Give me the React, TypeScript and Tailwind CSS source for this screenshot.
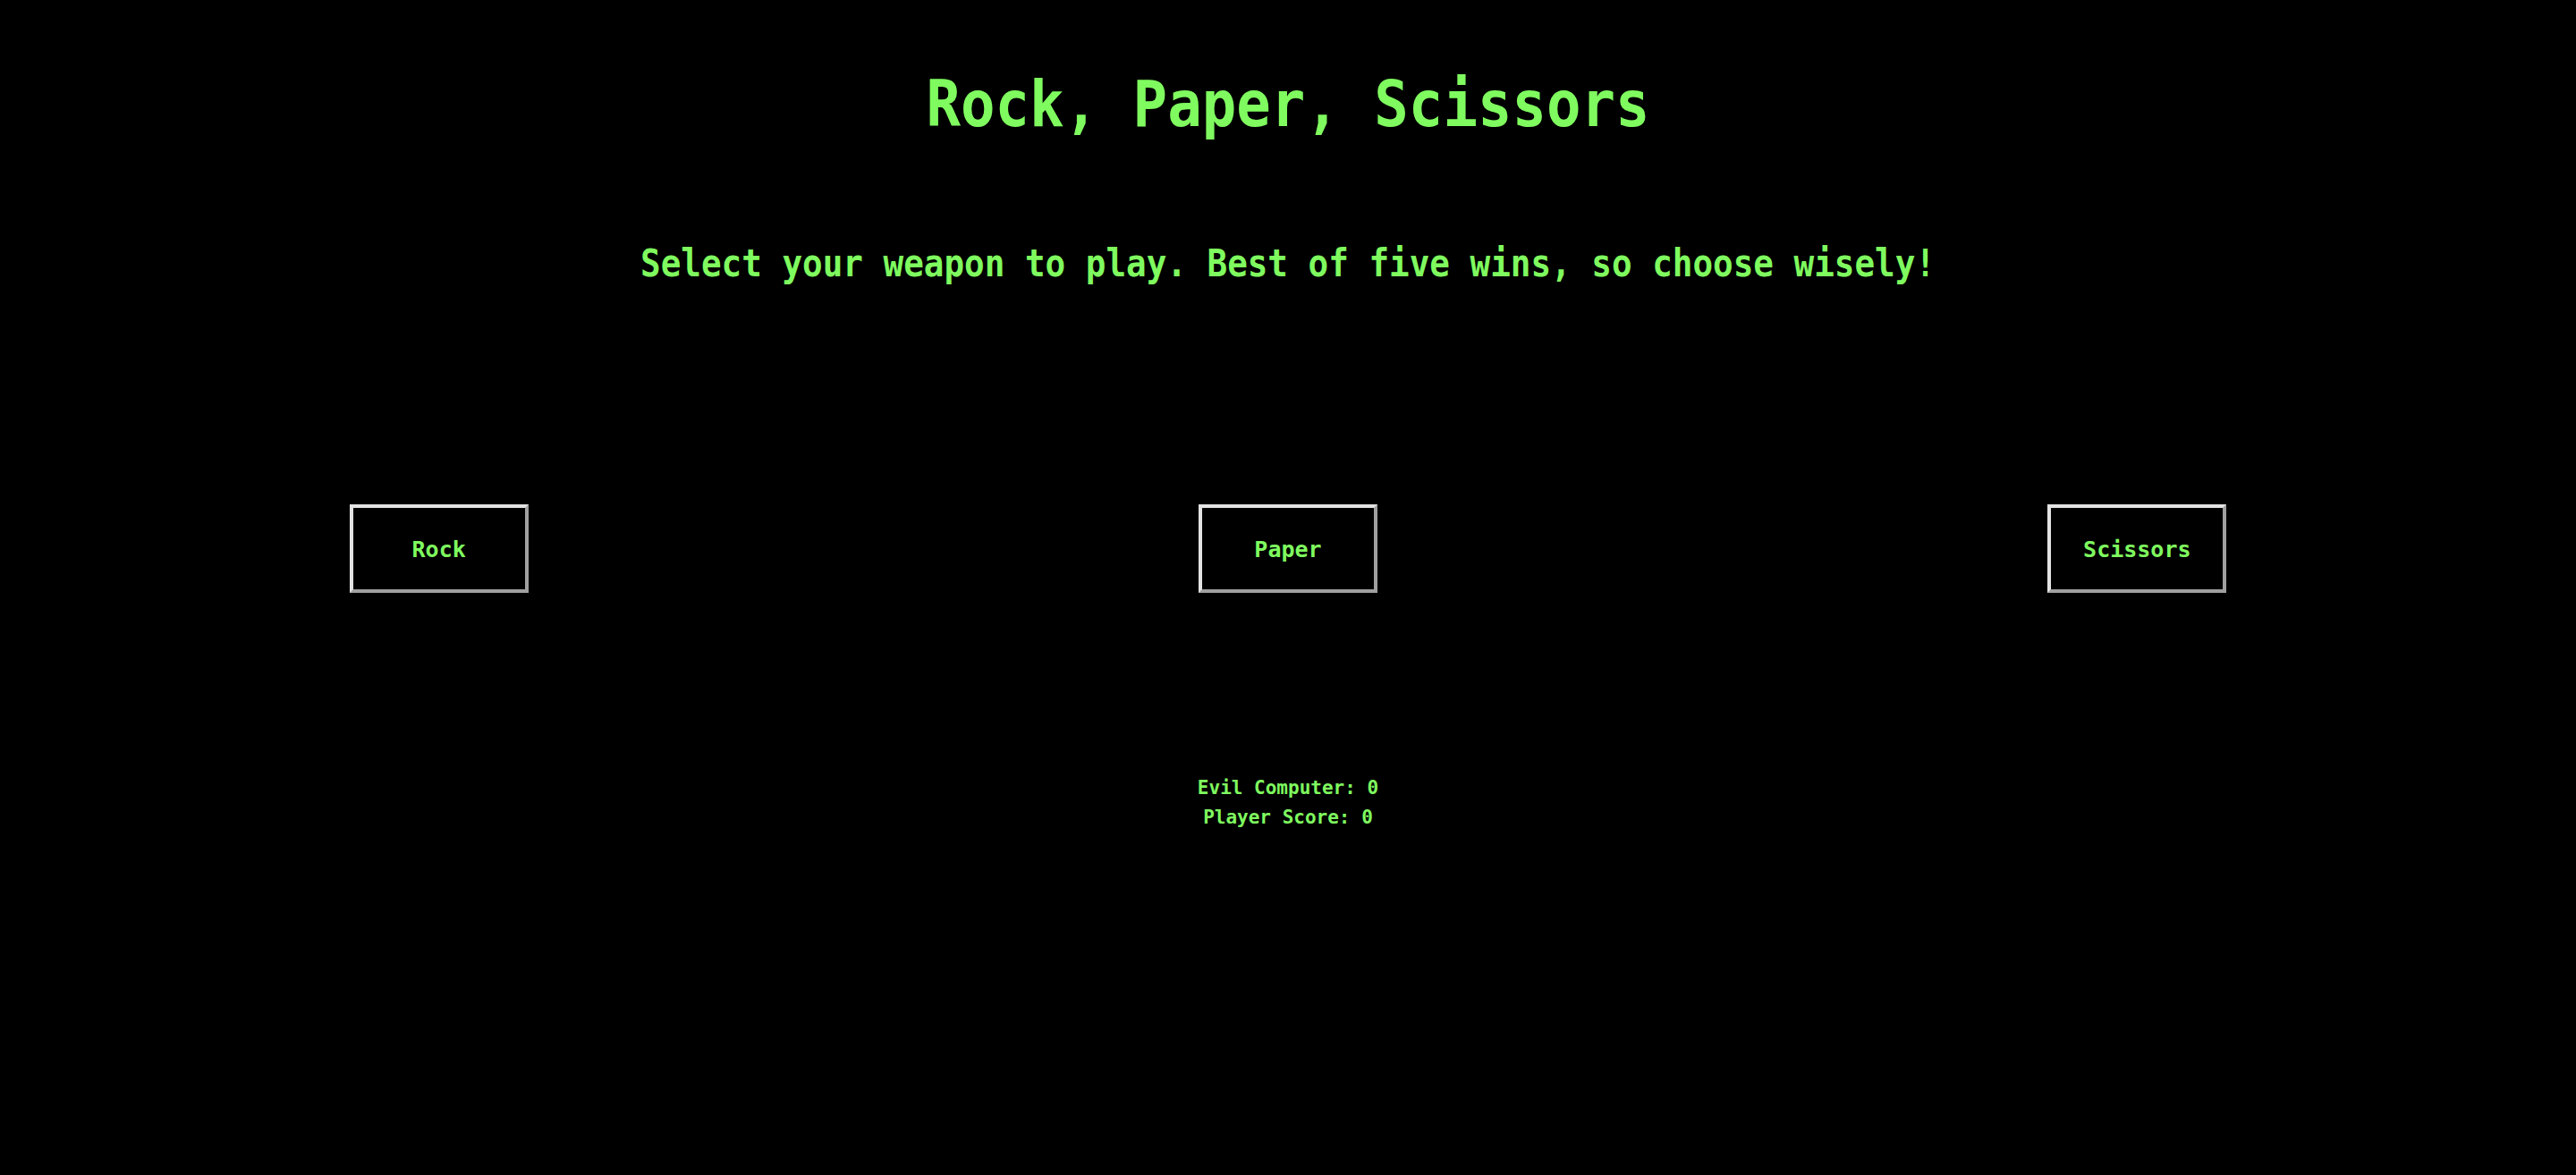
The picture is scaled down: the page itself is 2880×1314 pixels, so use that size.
import React from "react";

const mono = { fontFamily: '"DejaVu Sans Mono", "Liberation Mono", monospace' };

function WeaponButton({ label }: { label: string }) {
  return (
    <button
      className="w-[200px] h-[99px] bg-black border-4 border-solid border-t-[#e3e3e3] border-l-[#e3e3e3] border-b-[#a0a0a0] border-r-[#a0a0a0] text-[#7ffb5f] text-[25px] leading-[25px] font-bold flex items-center justify-center pt-[2px]"
      style={mono}
    >
      {label}
    </button>
  );
}

export default function App() {
  return (
    <div className="min-h-screen w-full bg-black text-[#7ffb5f] flex flex-col items-center" style={mono}>
      <h1 className="mt-[84px] text-[64px] leading-[64px] font-bold scale-y-[1.12]">Rock, Paper, Scissors</h1>
      <p className="mt-[129px] text-[37.6px] leading-[37.6px] font-bold scale-y-[1.12]">
        Select your weapon to play. Best of five wins, so choose wisely!
      </p>
      <div className="mt-[249px] w-full px-4 flex justify-around">
        <WeaponButton label="Rock" />
        <WeaponButton label="Paper" />
        <WeaponButton label="Scissors" />
      </div>
      <div className="mt-[202px] flex flex-col items-center text-[21px] leading-[33px] font-bold">
        <div>Evil Computer: 0</div>
        <div>Player Score: 0</div>
      </div>
    </div>
  );
}
